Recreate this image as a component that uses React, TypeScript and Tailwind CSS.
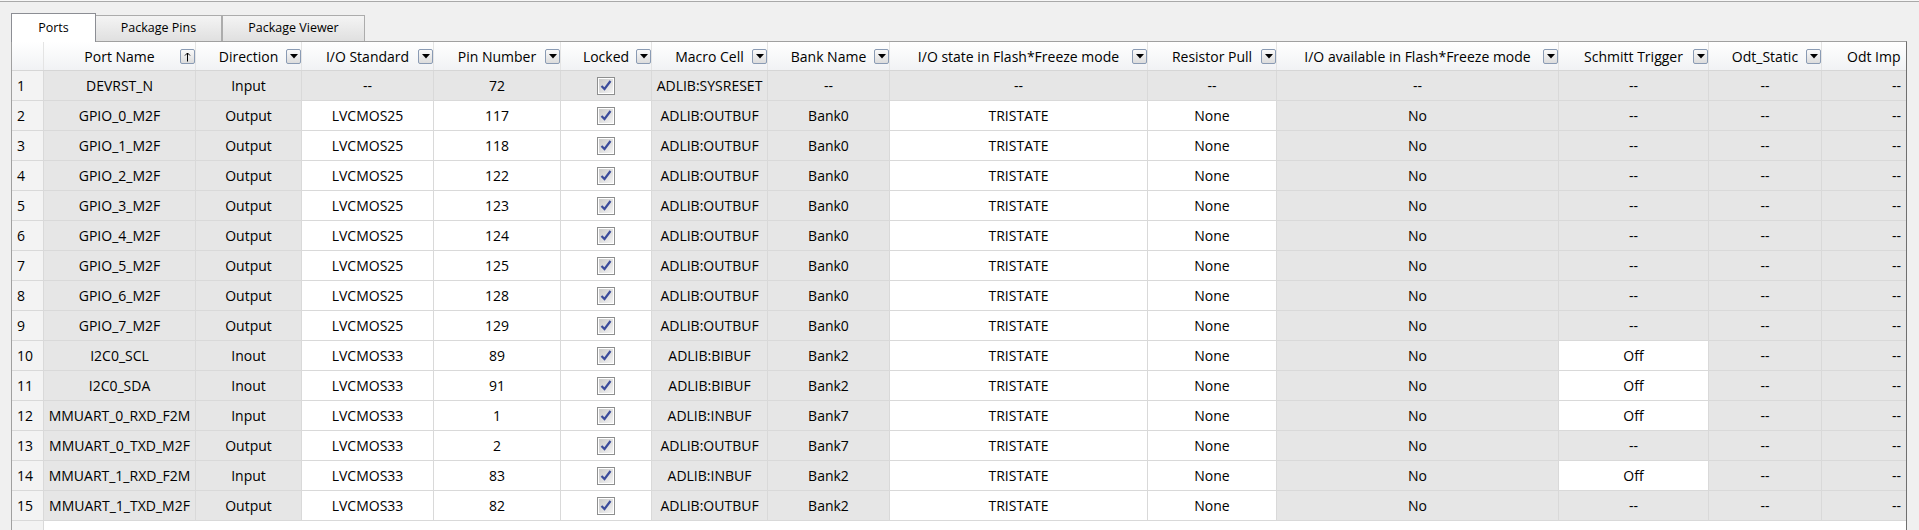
import React from 'react';

type Col = { title: string; width: string; sort?: 'up' | 'down' | 'none' };

const columns: Col[] = [
  { title: '', width: 'w-[32px]', sort: 'none' },
  { title: 'Port Name', width: 'w-[152px]', sort: 'up' },
  { title: 'Direction', width: 'w-[106px]', sort: 'down' },
  { title: 'I/O Standard', width: 'w-[132px]', sort: 'down' },
  { title: 'Pin Number', width: 'w-[127px]', sort: 'down' },
  { title: 'Locked', width: 'w-[91px]', sort: 'down' },
  { title: 'Macro Cell', width: 'w-[116px]', sort: 'down' },
  { title: 'Bank Name', width: 'w-[122px]', sort: 'down' },
  { title: 'I/O state in Flash*Freeze mode', width: 'w-[258px]', sort: 'down' },
  { title: 'Resistor Pull', width: 'w-[129px]', sort: 'down' },
  { title: 'I/O available in Flash*Freeze mode', width: 'w-[282px]', sort: 'down' },
  { title: 'Schmitt Trigger', width: 'w-[150px]', sort: 'down' },
  { title: 'Odt_Static', width: 'w-[113px]', sort: 'down' },
  { title: 'Odt Imp', width: 'w-[84px]', sort: 'none' },
];

interface Port {
  name: string;
  dir: string;
  std: string;
  pin: string;
  macro: string;
  bank: string;
  state: string;
  pull: string;
  avail: string;
  schmitt: string;
}

const ports: Port[] = [
  { name: 'DEVRST_N', dir: 'Input', std: '--', pin: '72', macro: 'ADLIB:SYSRESET', bank: '--', state: '--', pull: '--', avail: '--', schmitt: '--' },
  { name: 'GPIO_0_M2F', dir: 'Output', std: 'LVCMOS25', pin: '117', macro: 'ADLIB:OUTBUF', bank: 'Bank0', state: 'TRISTATE', pull: 'None', avail: 'No', schmitt: '--' },
  { name: 'GPIO_1_M2F', dir: 'Output', std: 'LVCMOS25', pin: '118', macro: 'ADLIB:OUTBUF', bank: 'Bank0', state: 'TRISTATE', pull: 'None', avail: 'No', schmitt: '--' },
  { name: 'GPIO_2_M2F', dir: 'Output', std: 'LVCMOS25', pin: '122', macro: 'ADLIB:OUTBUF', bank: 'Bank0', state: 'TRISTATE', pull: 'None', avail: 'No', schmitt: '--' },
  { name: 'GPIO_3_M2F', dir: 'Output', std: 'LVCMOS25', pin: '123', macro: 'ADLIB:OUTBUF', bank: 'Bank0', state: 'TRISTATE', pull: 'None', avail: 'No', schmitt: '--' },
  { name: 'GPIO_4_M2F', dir: 'Output', std: 'LVCMOS25', pin: '124', macro: 'ADLIB:OUTBUF', bank: 'Bank0', state: 'TRISTATE', pull: 'None', avail: 'No', schmitt: '--' },
  { name: 'GPIO_5_M2F', dir: 'Output', std: 'LVCMOS25', pin: '125', macro: 'ADLIB:OUTBUF', bank: 'Bank0', state: 'TRISTATE', pull: 'None', avail: 'No', schmitt: '--' },
  { name: 'GPIO_6_M2F', dir: 'Output', std: 'LVCMOS25', pin: '128', macro: 'ADLIB:OUTBUF', bank: 'Bank0', state: 'TRISTATE', pull: 'None', avail: 'No', schmitt: '--' },
  { name: 'GPIO_7_M2F', dir: 'Output', std: 'LVCMOS25', pin: '129', macro: 'ADLIB:OUTBUF', bank: 'Bank0', state: 'TRISTATE', pull: 'None', avail: 'No', schmitt: '--' },
  { name: 'I2C0_SCL', dir: 'Inout', std: 'LVCMOS33', pin: '89', macro: 'ADLIB:BIBUF', bank: 'Bank2', state: 'TRISTATE', pull: 'None', avail: 'No', schmitt: 'Off' },
  { name: 'I2C0_SDA', dir: 'Inout', std: 'LVCMOS33', pin: '91', macro: 'ADLIB:BIBUF', bank: 'Bank2', state: 'TRISTATE', pull: 'None', avail: 'No', schmitt: 'Off' },
  { name: 'MMUART_0_RXD_F2M', dir: 'Input', std: 'LVCMOS33', pin: '1', macro: 'ADLIB:INBUF', bank: 'Bank7', state: 'TRISTATE', pull: 'None', avail: 'No', schmitt: 'Off' },
  { name: 'MMUART_0_TXD_M2F', dir: 'Output', std: 'LVCMOS33', pin: '2', macro: 'ADLIB:OUTBUF', bank: 'Bank7', state: 'TRISTATE', pull: 'None', avail: 'No', schmitt: '--' },
  { name: 'MMUART_1_RXD_F2M', dir: 'Input', std: 'LVCMOS33', pin: '83', macro: 'ADLIB:INBUF', bank: 'Bank2', state: 'TRISTATE', pull: 'None', avail: 'No', schmitt: 'Off' },
  { name: 'MMUART_1_TXD_M2F', dir: 'Output', std: 'LVCMOS33', pin: '82', macro: 'ADLIB:OUTBUF', bank: 'Bank2', state: 'TRISTATE', pull: 'None', avail: 'No', schmitt: '--' },
];

const SortButton = ({ kind }: { kind: 'up' | 'down' }) => (
  <span className="absolute right-0 top-[7px] w-[15px] h-[15px] border border-[#8a9bb4] rounded-[2px] bg-gradient-to-b from-[#fafafa] to-[#dcdcdc] flex items-center justify-center">
    {kind === 'down' ? (
      <svg width="8" height="5" viewBox="0 0 8 5">
        <path d="M0 0h8L4 4.5z" fill="#000" />
      </svg>
    ) : (
      <svg width="7" height="10" viewBox="0 0 7 10">
        <path d="M3.5 1v8.5" stroke="#000" strokeWidth="1" />
        <path d="M1 3.5L3.5 1L6 3.5" stroke="#000" strokeWidth="1" fill="none" />
      </svg>
    )}
  </span>
);

const CheckBox = () => (
  <span className="w-[18px] h-[18px] border border-[#8e8f8f] bg-white p-px flex">
    <span className="flex-1 bg-gradient-to-br from-[#c9c9c9] to-[#f4f4f4] flex items-center justify-center">
      <svg width="12" height="11" viewBox="0 0 12 11">
        <path d="M1.5 6L4.5 9L10.5 1" stroke="#3b4c9b" strokeWidth="2.2" fill="none" />
      </svg>
    </span>
  </span>
);

const Cell = ({
  width,
  gray,
  children,
  align = 'center',
}: {
  width: string;
  gray: boolean;
  children?: React.ReactNode;
  align?: 'center' | 'left' | 'right';
}) => (
  <div
    className={`${width} shrink-0 h-full border-r border-[#d9d9d9] flex items-center overflow-hidden whitespace-nowrap ${
      gray ? 'bg-[#e6e6e6]' : 'bg-white'
    } ${align === 'center' ? 'justify-center' : align === 'left' ? 'justify-start pl-[5px]' : 'justify-end pr-[5px]'}`}
  >
    {children}
  </div>
);

export default function App() {
  return (
    <div className="w-[1919px] h-[530px] bg-[#f0f0f0] overflow-hidden flex flex-col text-black font-['Open_Sans',sans-serif]">
      <div className="h-px bg-[#f7f7f7]" />
      <div className="h-px bg-[#a9a9a9]" />

      {/* Tabs */}
      <div className="flex items-end pl-[11px] pt-[11px] h-[39px] relative z-10">
        <div className="w-[85px] h-[29px] -mb-px bg-white border border-b-0 border-[#8c8e94] flex items-center justify-center text-[12.5px]">
          Ports
        </div>
        <div className="w-[126px] h-[26px] border border-b-0 border-l-0 border-[#acacac] bg-gradient-to-b from-[#f4f4f4] to-[#e0e0e0] flex items-center justify-center text-[12.5px]">
          Package Pins
        </div>
        <div className="w-[143px] h-[26px] border border-b-0 border-[#acacac] bg-gradient-to-b from-[#f4f4f4] to-[#e0e0e0] flex items-center justify-center text-[12.5px]">
          Package Viewer
        </div>
      </div>

      {/* Grid panel */}
      <div className="ml-[11px] w-[1896px] flex-1 border-l border-t border-r border-l-[#a0a0a0] border-t-[#a0a0a0] border-r-[#6f6f6f] bg-white flex flex-col text-[14px]">
        {/* Header */}
        <div className="h-[29px] flex border-b border-[#d6d6d6] bg-gradient-to-b from-[#ffffff] to-[#f1f2f4] shrink-0">
          {columns.map((c, i) => (
            <div
              key={i}
              className={`${c.width} shrink-0 h-full relative border-r border-[#e4e4e4] flex items-center whitespace-nowrap overflow-hidden ${
                i === columns.length - 1 ? 'justify-start pl-[25px] border-r-0' : 'justify-center'
              }`}
            >
              {c.title}
              {(c.sort === 'up' || c.sort === 'down') && <SortButton kind={c.sort} />}
            </div>
          ))}
        </div>

        {/* Rows */}
        {ports.map((p, idx) => {
          const first = idx === 0;
          const editable = !first;
          return (
            <div key={idx} className="h-[30px] flex border-b border-[#d9d9d9] shrink-0">
              <div className="w-[32px] shrink-0 h-full border-r border-[#d9d9d9] bg-[#f3f3f3] flex items-center pl-[5px]">
                {idx + 1}
              </div>
              <Cell width="w-[152px]" gray>{p.name}</Cell>
              <Cell width="w-[106px]" gray>{p.dir}</Cell>
              <Cell width="w-[132px]" gray={!editable}>{p.std}</Cell>
              <Cell width="w-[127px]" gray={!editable}>{p.pin}</Cell>
              <Cell width="w-[91px]" gray={!editable}>
                <CheckBox />
              </Cell>
              <Cell width="w-[116px]" gray>{p.macro}</Cell>
              <Cell width="w-[122px]" gray>{p.bank}</Cell>
              <Cell width="w-[258px]" gray={!editable}>{p.state}</Cell>
              <Cell width="w-[129px]" gray={!editable}>{p.pull}</Cell>
              <Cell width="w-[282px]" gray>{p.avail}</Cell>
              <Cell width="w-[150px]" gray={p.schmitt !== 'Off'}>{p.schmitt}</Cell>
              <Cell width="w-[113px]" gray>--</Cell>
              <div className="w-[84px] shrink-0 h-full bg-[#e6e6e6] flex items-center justify-end pr-[5px]">--</div>
            </div>
          );
        })}

        {/* Empty area below the last row */}
        <div className="flex-1 flex">
          <div className="w-[32px] bg-[#f3f3f3] border-r border-[#d9d9d9]" />
          <div className="flex-1 bg-white" />
        </div>
      </div>
    </div>
  );
}
